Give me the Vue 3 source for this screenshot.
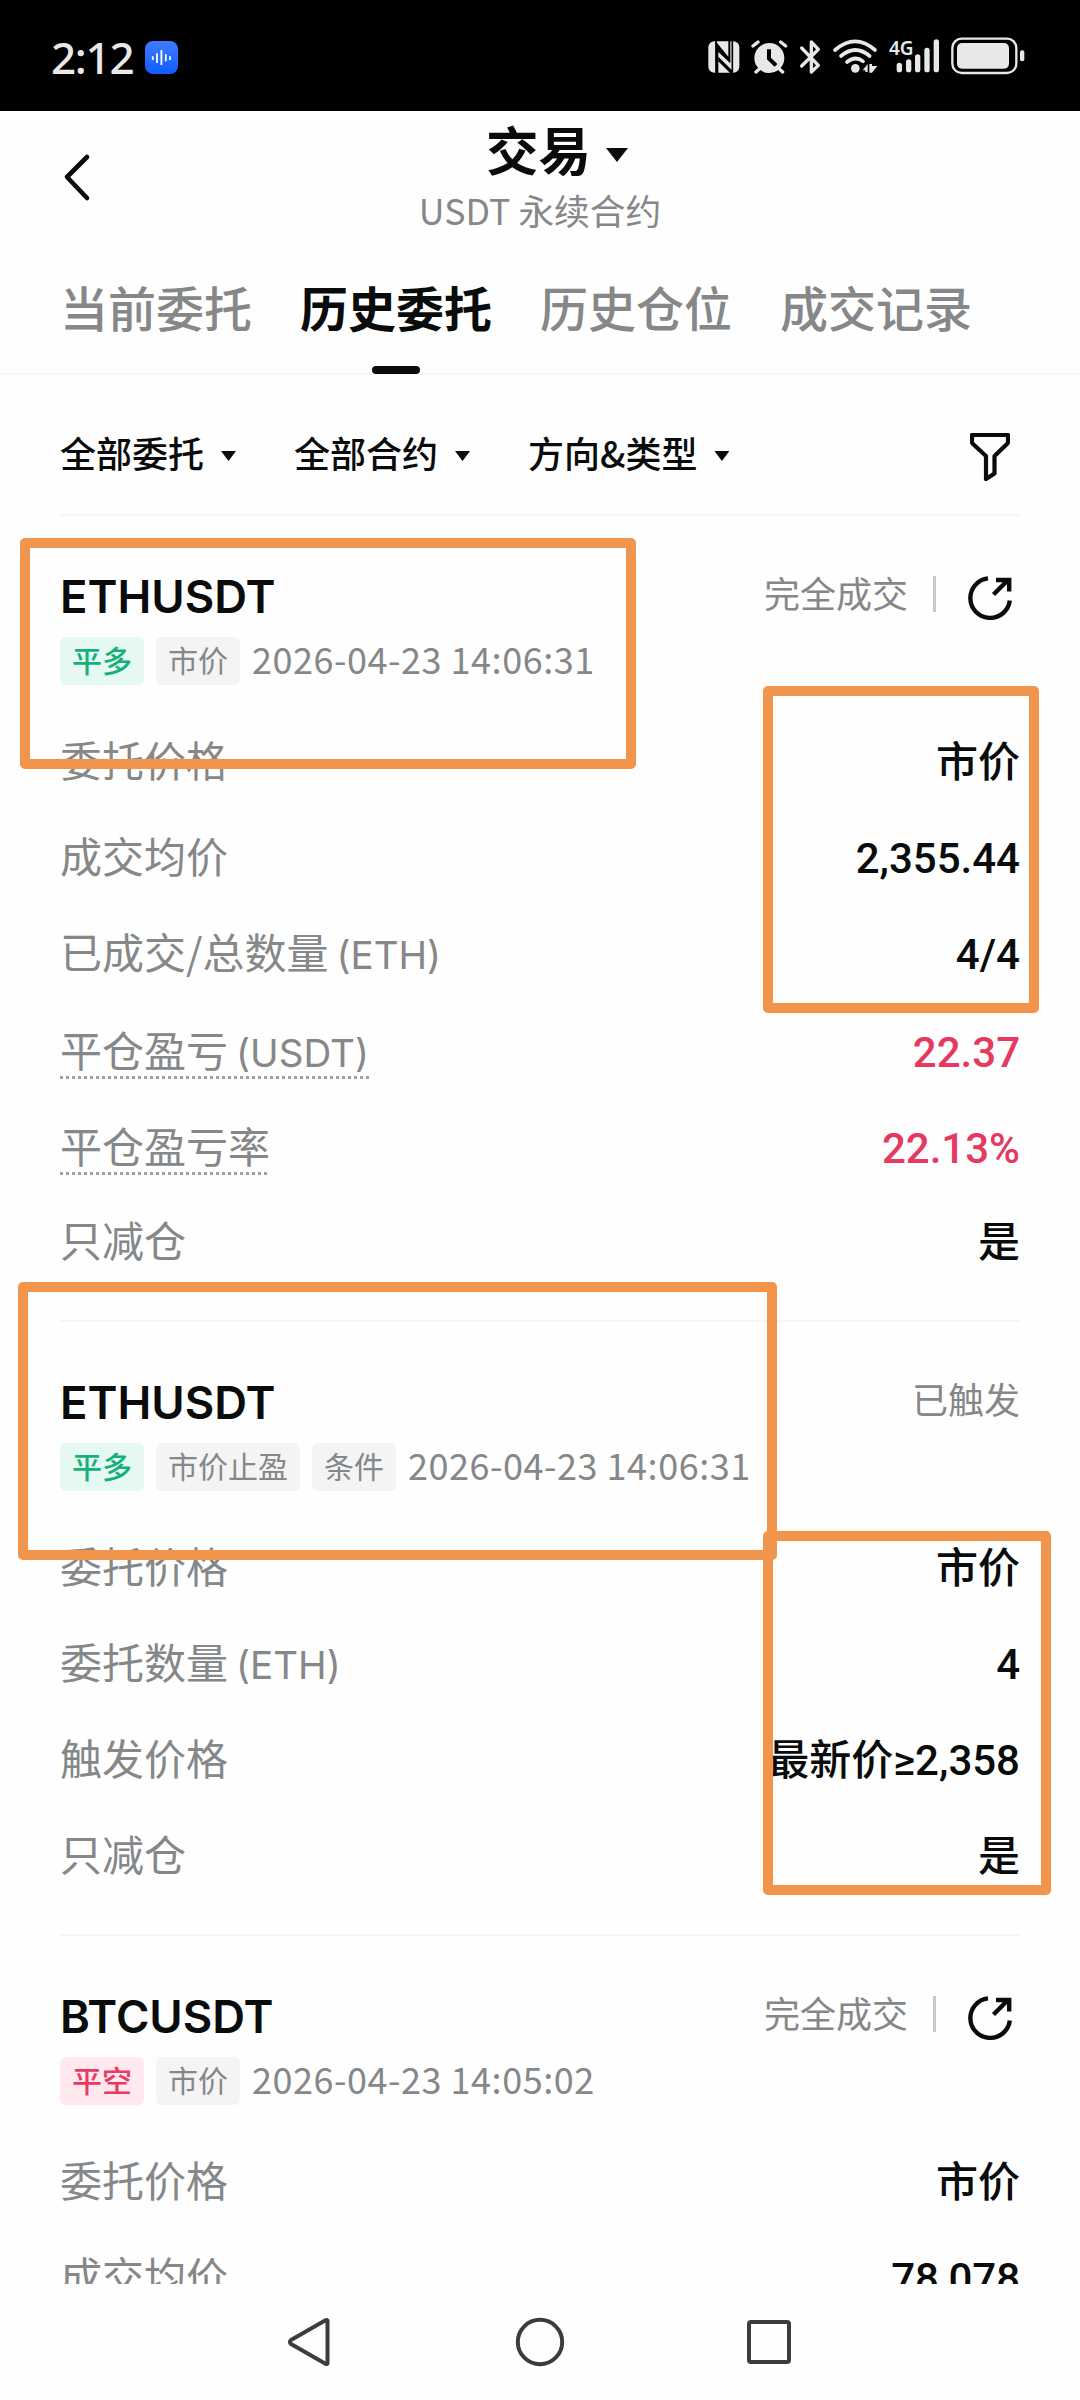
<script setup>
const tabs = ['当前委托', '历史委托', '历史仓位', '成交记录']
const activeTab = 1
const filters = ['全部委托', '全部合约', '方向&类型']

const orders = [
  {
    symbol: 'ETHUSDT',
    status: '完全成交',
    shareable: true,
    tags: [{ text: '平多', tone: 'green' }, { text: '市价', tone: 'grey' }],
    time: '2026-04-23 14:06:31',
    rows: [
      { label: '委托价格', value: '市价' },
      { label: '成交均价', value: '2,355.44' },
      { label: '已成交/总数量', unit: '(ETH)', value: '4/4' },
      { label: '平仓盈亏', unit: '(USDT)', value: '22.37', hint: true },
      { label: '平仓盈亏率', value: '22.13%', hint: true },
      { label: '只减仓', value: '是' },
    ],
  },
  {
    symbol: 'ETHUSDT',
    status: '已触发',
    shareable: false,
    tags: [
      { text: '平多', tone: 'green' },
      { text: '市价止盈', tone: 'grey' },
      { text: '条件', tone: 'grey' },
    ],
    time: '2026-04-23 14:06:31',
    rows: [
      { label: '委托价格', value: '市价' },
      { label: '委托数量', unit: '(ETH)', value: '4' },
      { label: '触发价格', value: '最新价≥2,358' },
      { label: '只减仓', value: '是' },
    ],
  },
  {
    symbol: 'BTCUSDT',
    status: '完全成交',
    shareable: true,
    tags: [{ text: '平空', tone: 'red' }, { text: '市价', tone: 'grey' }],
    time: '2026-04-23 14:05:02',
    rows: [
      { label: '委托价格', value: '市价' },
      { label: '成交均价', value: '78,078' },
    ],
  },
]
</script>

<template>
  <div class="phone">
    <div class="statusbar">
      <div class="clock">
        <span class="time">2:12</span>
        <svg class="voice" viewBox="0 0 33 33">
          <defs>
            <linearGradient id="voiceBg" x1="0" y1="0" x2="0" y2="1">
              <stop offset="0" stop-color="#3f7bff" />
              <stop offset="1" stop-color="#0f5cff" />
            </linearGradient>
          </defs>
          <rect width="33" height="33" rx="8" fill="url(#voiceBg)" />
          <path d="M7.8 15.2v3.8M12 12.2v9.8M16.4 9v15M20.8 13.2v7M25 15.2v3.8" stroke="#fff" stroke-width="1.8" />
        </svg>
      </div>
      <svg class="sysicons" viewBox="0 0 960 120">
        <!-- NFC -->
        <rect x="4" y="16" width="93" height="94" rx="18" fill="#e8e8e8" />
        <path d="M27 14V112M76 14V112" fill="none" stroke="#000" stroke-width="5" />
        <path d="M26 16L64 62V14H70V82L34 48V112H27Z" fill="#000" />
        <path d="M34 62L78 106V112H70L34 76Z" fill="#000" />
        <!-- alarm -->
        <circle cx="187" cy="66" r="45" fill="#e8e8e8" />
        <path d="M138 30L153 18M236 30L221 18M156 100L147 108M218 100L227 108" stroke="#e8e8e8" stroke-width="10" stroke-linecap="round" />
        <path d="M186 40V68L207 88" fill="none" stroke="#000" stroke-width="12" stroke-linejoin="round" />
        <!-- bluetooth -->
        <path d="M284 36L334 88L313 108V18L334 40L284 90" fill="none" stroke="#e8e8e8" stroke-width="10" stroke-linecap="round" stroke-linejoin="round" />
        <!-- wifi -->
        <g fill="none" stroke="#e8e8e8" stroke-width="11" stroke-linecap="round">
          <path d="M384 42Q445 -10 504 42" />
          <path d="M402 60Q445 24 488 60" />
          <path d="M420 78Q445 58 468 76" />
        </g>
        <circle cx="445" cy="97" r="13" fill="#e8e8e8" />
        <path d="M467 103L482 84V108H475V103ZM487 84H495V90H511L495 110H487Z" fill="#e8e8e8" />
        <!-- signal -->
        <text x="546" y="58" class="net" textLength="74" lengthAdjust="spacingAndGlyphs">4G</text>
        <path d="M577 88V101M605 78V101M632 63V101M660 43V101M688 18V101" stroke="#e8e8e8" stroke-width="16" stroke-linecap="round" />
        <!-- battery -->
        <rect x="736" y="8" width="192" height="103" rx="28" fill="none" stroke="#e8e8e8" stroke-width="7" />
        <rect x="750" y="21" width="156" height="77" rx="15" fill="#e8e8e8" />
        <rect x="939" y="43" width="13" height="33" rx="6" fill="#e8e8e8" />
      </svg>
    </div>

    <header class="header">
      <svg class="back" viewBox="0 0 30 50"><path d="M25 5L5 25L25 46" /></svg>
      <div class="heading">
        <h1>交易<i class="caret big"></i></h1>
        <p>USDT 永续合约</p>
      </div>
    </header>

    <nav class="tabs">
      <span v-for="(t, i) in tabs" :key="t" :class="{ active: i === activeTab }">{{ t }}</span>
    </nav>

    <div class="filters">
      <span v-for="f in filters" :key="f" class="filter">{{ f }}<i class="caret"></i></span>
      <svg class="funnel" viewBox="0 0 40 48">
        <path d="M2 2H38V9Q38 10 37 11L24.5 23V40.5L16 46V23L3 11Q2 10 2 9Z" />
      </svg>
    </div>

    <main class="list">
      <section v-for="(o, n) in orders" :key="n" class="order">
        <div class="top">
          <span class="symbol">{{ o.symbol }}</span>
          <span class="status">{{ o.status }}</span>
          <template v-if="o.shareable">
            <i class="bar"></i>
            <svg class="share" viewBox="0 0 44 44">
              <path d="M20 2.4A19.8 19.8 0 1 0 41.8 24.5" />
              <path d="M25.5 18.5L40 4M28 4H41.2V15.5" />
            </svg>
          </template>
        </div>
        <div class="meta">
          <span v-for="t in o.tags" :key="t.text" class="tag" :class="t.tone">{{ t.text }}</span>
          <span class="date">{{ o.time }}</span>
        </div>
        <div v-for="r in o.rows" :key="r.label" class="row" :class="{ hint: r.hint }">
          <span class="label">{{ r.label }}<span v-if="r.unit" class="unit">{{ r.unit }}</span></span>
          <span class="value">{{ r.value }}</span>
        </div>
      </section>
    </main>

    <footer class="navbar">
      <svg viewBox="0 0 50 50"><path d="M41.5 3.6V46.4Q41 47.6 39.5 46.8L5 27Q2.8 25 5 23L39.5 3.2Q41 2.4 41.5 3.6Z" /></svg>
      <svg viewBox="0 0 50 50"><circle cx="25" cy="25" r="22.2" /></svg>
      <svg viewBox="0 0 50 50"><rect x="5" y="5" width="40" height="40" rx="2" /></svg>
    </footer>

    <div class="mark m1"></div>
    <div class="mark m2"></div>
    <div class="mark m3"></div>
    <div class="mark m4"></div>
  </div>
</template>

<style>
body {
  margin: 0;
  background: #fefefe;
}
</style>

<style scoped>
.phone {
  position: relative;
  display: flex;
  flex-direction: column;
  width: 1080px;
  height: 2400px;
  overflow: hidden;
  background: #fefefe;
  color: #0a0b0b;
  font-family: "Noto Sans CJK SC", "Noto Sans", sans-serif;
}
.statusbar {
  display: flex;
  flex: none;
  box-sizing: border-box;
  justify-content: space-between;
  height: 111px;
  padding: 36px 53px 0 51px;
  background: #000;
}
.clock {
  display: flex;
  height: 43px;
  align-items: center;
}
.time {
  width: 94px;
  color: #e8e8e8;
  font-size: 44px;
  font-family: "Noto Sans", sans-serif;
  font-weight: 500;
  line-height: 43px;
  letter-spacing: -1.3px;
}
.voice {
  width: 33px;
  height: 33px;
}
.sysicons {
  width: 320px;
  height: 40px;
  overflow: visible;
}
.net {
  fill: #e8e8e8;
  font: 600 60px "Noto Sans", sans-serif;
}
.header {
  display: flex;
  flex: none;
  height: 149px;
  padding: 0 60px;
}
.back {
  width: 30px;
  height: 50px;
  margin: 41px -2px 0 2px;
}
.back path {
  fill: none;
  stroke: #0a0b0b;
  stroke-width: 4.6;
  stroke-linecap: round;
  stroke-linejoin: round;
}
.heading {
  flex: 1;
  margin-right: 30px;
  text-align: center;
}
h1 {
  margin: 5px 3px 0 0;
  font-size: 52.5px;
  font-weight: 700;
  line-height: 64px;
}
p {
  margin: 11px 0 0;
  color: #858788;
  font-size: 35.7px;
  line-height: 38px;
}
.caret {
  display: inline-block;
  width: 15px;
  height: 10px;
  margin-left: 17px;
  background: currentColor;
  clip-path: polygon(0 0, 100% 0, 50% 100%);
}
.caret.big {
  width: 22px;
  height: 14px;
  margin: 0 -37px 9px 15px;
}
.tabs {
  display: flex;
  flex: none;
  box-sizing: border-box;
  gap: 48px;
  height: 115px;
  padding: 0 60px;
  border-bottom: 2px solid #f5f5f6;
}
.tabs span {
  position: relative;
  color: #858788;
  font-size: 48px;
  font-weight: 500;
  line-height: 93px;
}
.tabs .active {
  color: #0a0b0b;
  font-weight: 700;
}
.tabs .active::after {
  position: absolute;
  bottom: -1px;
  left: 72px;
  width: 48px;
  height: 8px;
  border-radius: 4px;
  background: #0a0b0b;
  content: "";
}
.filters {
  display: flex;
  flex: none;
  box-sizing: border-box;
  height: 141px;
  align-items: center;
  margin: 0 60px;
  border-bottom: 2px solid #f6f6f7;
}
.filter {
  display: flex;
  align-items: center;
  margin: 14px 58px 0 0;
  font-size: 36px;
  font-weight: 500;
  line-height: 54px;
}
.filter .caret {
  margin-top: 9px;
}
.funnel {
  width: 40px;
  height: 48px;
  margin: 25px 10px 0 auto;
}
.funnel path {
  fill: none;
  stroke: #0a0b0b;
  stroke-width: 4.2;
  stroke-linejoin: round;
}
.list {
  height: 1768px;
  flex: none;
  padding: 0 60px;
  overflow: hidden;
}
.order {
  padding-bottom: 51px;
  border-bottom: 2px solid #f6f6f7;
}
.top {
  display: flex;
  align-items: center;
  height: 60px;
  padding-top: 50px;
}
.symbol {
  flex: 1;
  font-family: Inter, sans-serif;
  font-size: 45.4px;
  font-weight: 600;
}
.status {
  margin-top: -9px;
  color: #858788;
  font-size: 36px;
}
.bar {
  width: 3px;
  height: 36px;
  margin: -4px 32px 0 25px;
  background: #c8c8c9;
}
.share {
  width: 44px;
  height: 44px;
  margin: 3px 8px 0 0;
}
.share path {
  fill: none;
  stroke: #0a0b0b;
  stroke-width: 4.4;
}
.meta {
  display: flex;
  align-items: center;
  gap: 12px;
  height: 48px;
  margin: 11px 0 44px;
}
.tag {
  height: 48px;
  padding: 0 12px;
  border-radius: 6px;
  font-size: 30px;
  line-height: 44px;
}
.tag.green {
  background: #e5f8f1;
  color: #16b07c;
  font-weight: 500;
}
.tag.red {
  background: #ffe9ee;
  color: #ea3a63;
  font-weight: 500;
}
.tag.grey {
  background: #f4f4f5;
  color: #858788;
}
.date {
  margin-top: -7px;
  color: #858788;
  font-size: 36px;
  letter-spacing: 0.52px;
}
.row {
  display: flex;
  justify-content: space-between;
  height: 60px;
  margin-bottom: 36px;
  font-size: 42px;
  line-height: 60px;
}
.row:last-child {
  margin-bottom: 0;
}
.label {
  color: #858788;
}
.unit {
  margin-left: 8px;
  font-family: Inter, sans-serif;
  font-size: 38.5px;
}
.value {
  margin-top: 4px;
  font-family: Roboto, "Noto Sans CJK SC", sans-serif;
  font-weight: 500;
}
.hint {
  position: relative;
  top: 2px;
}
.hint .label {
  height: 60px;
  background: repeating-linear-gradient(90deg, #a0a1a2 0 3px, transparent 3px 6px) 0 100% / 100% 3px no-repeat;
}
.hint .value {
  color: #e5395f;
}
.navbar {
  display: flex;
  flex: none;
  gap: 179px;
  height: 116px;
  align-items: center;
  padding-left: 286px;
}
.navbar svg {
  width: 50px;
  height: 50px;
}
.navbar svg * {
  fill: none;
  stroke: #3c3c3c;
  stroke-width: 4;
  stroke-linejoin: round;
}
.mark {
  position: absolute;
  box-sizing: border-box;
  border: 10px solid #f1944c;
  border-radius: 5px;
}
.m1 {
  top: 538px;
  left: 20px;
  width: 616px;
  height: 231px;
}
.m2 {
  top: 686px;
  left: 763px;
  width: 276px;
  height: 327px;
}
.m3 {
  top: 1282px;
  left: 18px;
  width: 759px;
  height: 278px;
}
.m4 {
  top: 1531px;
  left: 763px;
  width: 288px;
  height: 364px;
}
</style>
